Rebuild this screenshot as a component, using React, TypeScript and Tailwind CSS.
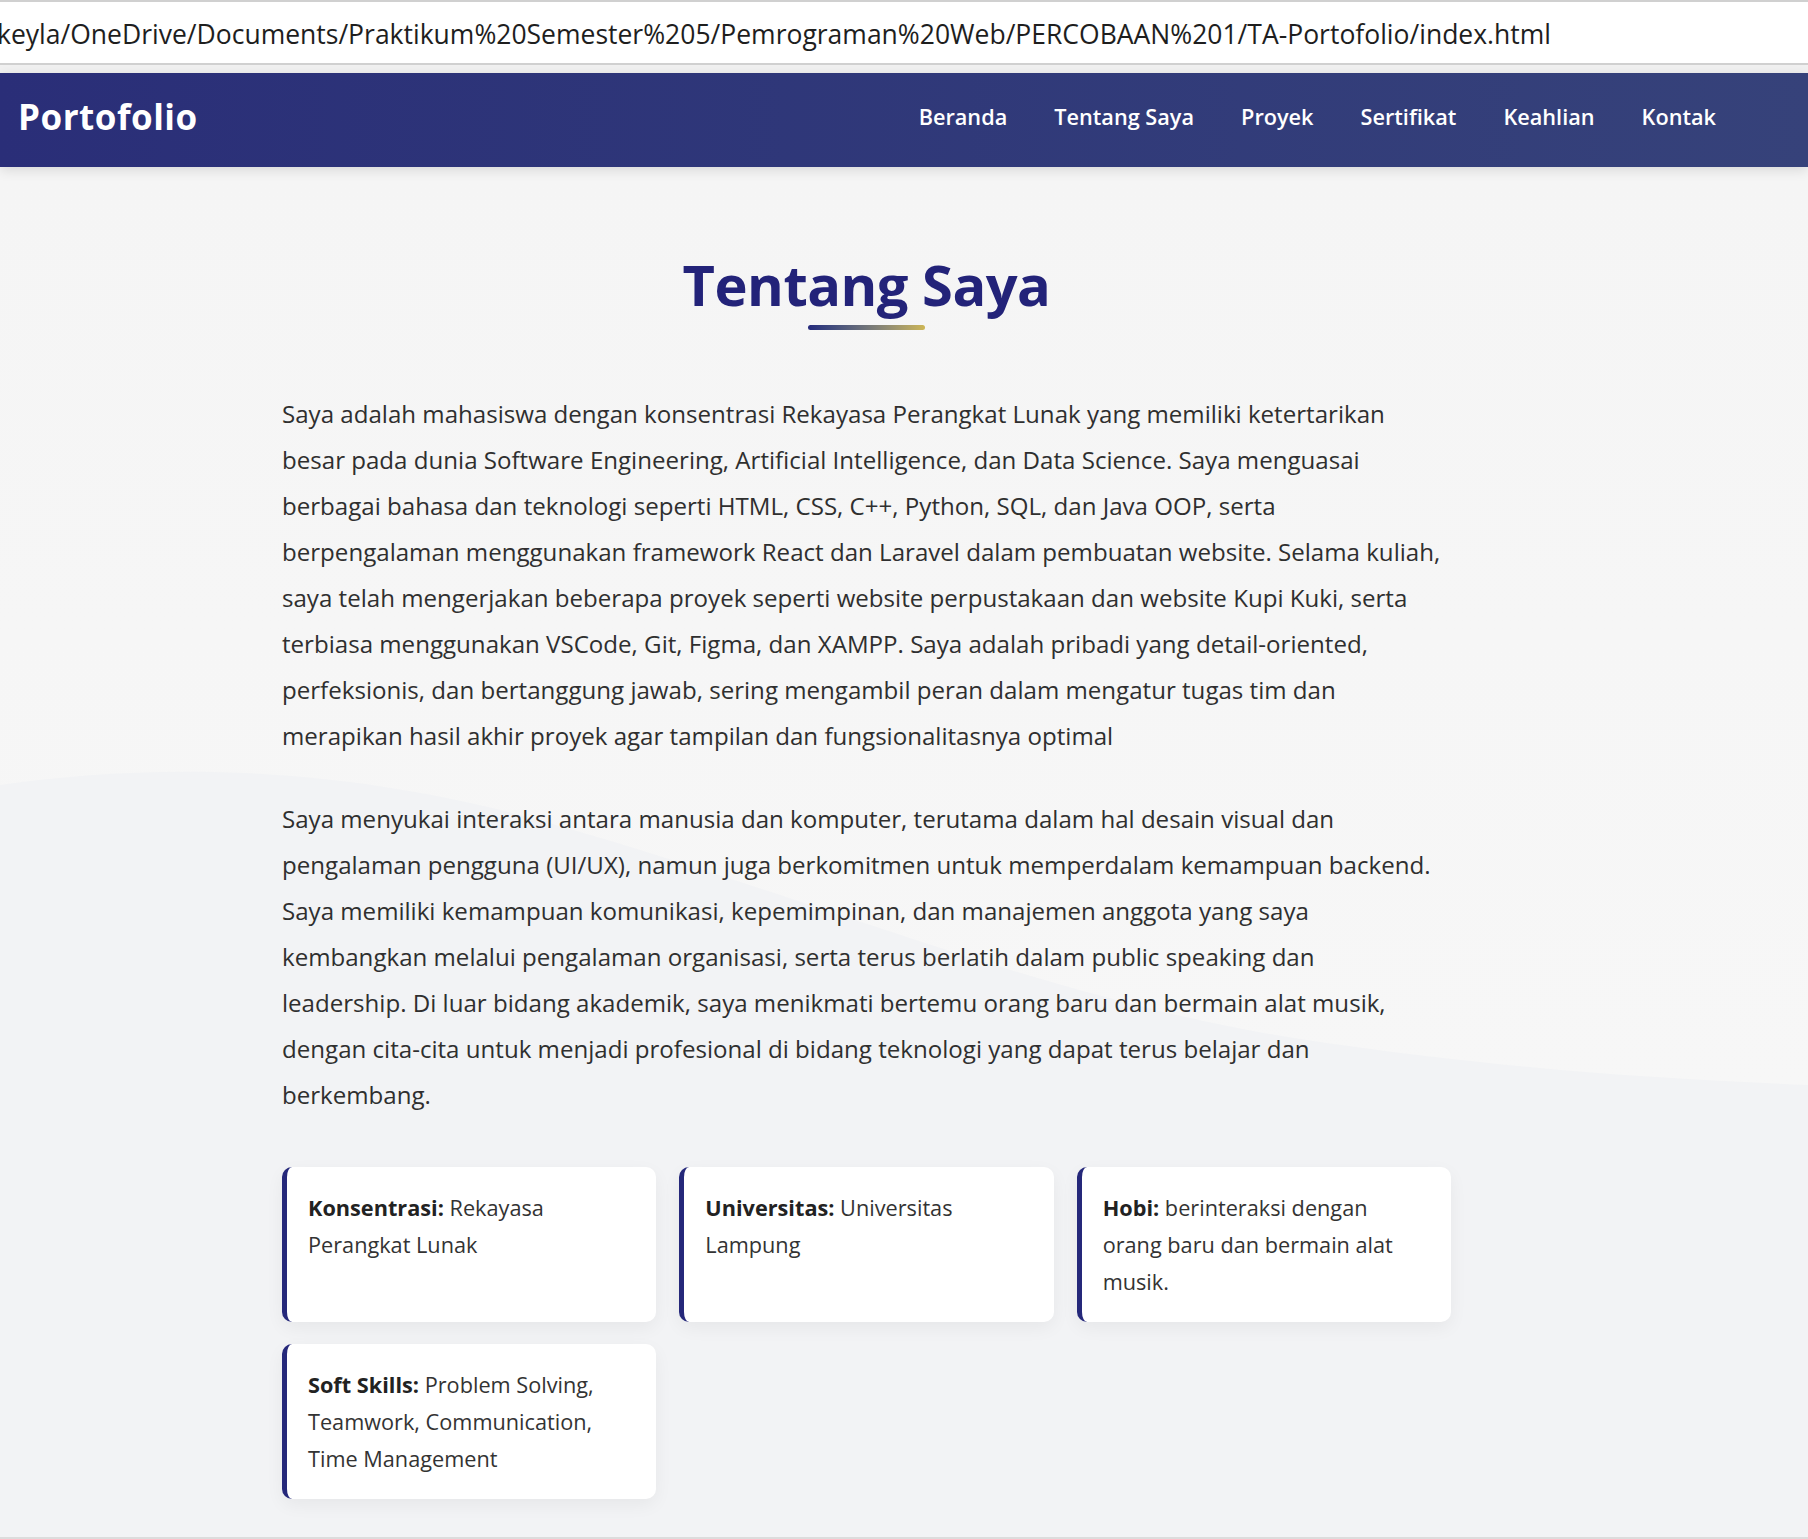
import React from "react";

const para1 = [
  "Saya adalah mahasiswa dengan konsentrasi Rekayasa Perangkat Lunak yang memiliki ketertarikan",
  "besar pada dunia Software Engineering, Artificial Intelligence, dan Data Science. Saya menguasai",
  "berbagai bahasa dan teknologi seperti HTML, CSS, C++, Python, SQL, dan Java OOP, serta",
  "berpengalaman menggunakan framework React dan Laravel dalam pembuatan website. Selama kuliah,",
  "saya telah mengerjakan beberapa proyek seperti website perpustakaan dan website Kupi Kuki, serta",
  "terbiasa menggunakan VSCode, Git, Figma, dan XAMPP. Saya adalah pribadi yang detail-oriented,",
  "perfeksionis, dan bertanggung jawab, sering mengambil peran dalam mengatur tugas tim dan",
  "merapikan hasil akhir proyek agar tampilan dan fungsionalitasnya optimal",
];

const para2 = [
  "Saya menyukai interaksi antara manusia dan komputer, terutama dalam hal desain visual dan",
  "pengalaman pengguna (UI/UX), namun juga berkomitmen untuk memperdalam kemampuan backend.",
  "Saya memiliki kemampuan komunikasi, kepemimpinan, dan manajemen anggota yang saya",
  "kembangkan melalui pengalaman organisasi, serta terus berlatih dalam public speaking dan",
  "leadership. Di luar bidang akademik, saya menikmati bertemu orang baru dan bermain alat musik,",
  "dengan cita-cita untuk menjadi profesional di bidang teknologi yang dapat terus belajar dan",
  "berkembang.",
];

const cards = [
  { label: "Konsentrasi:", lines: ["Rekayasa", "Perangkat Lunak"] },
  { label: "Universitas:", lines: ["Universitas", "Lampung"] },
  { label: "Hobi:", lines: ["berinteraksi dengan", "orang baru dan bermain alat", "musik."] },
  { label: "Soft Skills:", lines: ["Problem Solving,", "Teamwork, Communication,", "Time Management"] },
];

function Paragraph({ lines, className }: { lines: string[]; className?: string }) {
  return (
    <p className={"text-[24.1px] leading-[46px] text-[#2f2f2f] whitespace-nowrap " + (className ?? "")}>
      {lines.map((l, i) => (
        <React.Fragment key={i}>
          {l}
          {i < lines.length - 1 && <br />}
        </React.Fragment>
      ))}
    </p>
  );
}

export default function App() {
  return (
    <div className="w-[1808px] min-h-[1539px] bg-[#f5f5f5] font-['Open_Sans','Noto_Sans',sans-serif] overflow-hidden">
      {/* address bar */}
      <div className="h-[65px] bg-white border-t-2 border-b-2 border-[#d0d0d0] flex items-center overflow-hidden">
        <span className="mt-[4px] -ml-[3px] whitespace-nowrap text-[26.5px] text-[#1e1e1e]">
          keyla/OneDrive/Documents/Praktikum%20Semester%205/Pemrograman%20Web/PERCOBAAN%201/TA-Portofolio/index.html
        </span>
      </div>
      <div className="h-[8px] bg-[#f1f1f1]" />

      {/* nav */}
      <nav className="relative z-10 h-[94px] bg-gradient-to-r from-[#2a2e78] to-[#36427a] flex items-center justify-between pl-[18px] pr-[92px] pb-[5px] shadow-[0_3px_12px_rgba(0,0,0,0.12)]">
        <div className="text-white font-bold text-[35px] tracking-[0.5px]">Portofolio</div>
        <ul className="flex items-center gap-[47px] text-white font-semibold text-[21.7px]">
          <li>Beranda</li>
          <li>Tentang Saya</li>
          <li>Proyek</li>
          <li>Sertifikat</li>
          <li>Keahlian</li>
          <li>Kontak</li>
        </ul>
      </nav>

      {/* about section */}
      <section className="relative bg-gradient-to-b from-[#f5f5f5] to-[#f8f8f8] min-h-[1372px]">
        <svg
          className="absolute inset-0 w-full h-full"
          viewBox="0 0 1808 1372"
          preserveAspectRatio="none"
        >
          <path
            d="M0,618 C150,596 330,598 520,648 C800,724 1040,832 1300,872 C1500,902 1660,912 1808,918 L1808,1372 L0,1372 Z"
            fill="#f2f3f5"
          />
        </svg>
        <div className="relative pr-[75px]">
          <div className="mx-auto w-[1169px] pt-[77px] pb-[36px]">
            <div className="flex flex-col items-center">
              <h2 className="text-[56px] leading-[80px] font-bold text-[#232379] tracking-[-0.5px]">Tentang Saya</h2>
              <div className="mt-[1px] h-[5px] w-[117px] rounded-full bg-gradient-to-r from-[#262a7c] to-[#cdb655]" />
            </div>

            <Paragraph lines={para1} className="mt-[61px]" />
            <Paragraph lines={para2} className="mt-[37px]" />

            <div className="mt-[49px] grid grid-cols-3 gap-x-[23px] gap-y-[22px]">
              {cards.map((c, i) => (
                <div
                  key={i}
                  className="min-h-[155px] bg-white rounded-[10px] border-l-[5px] border-[#25287a] pl-[21px] pr-[19px] py-[22px] shadow-[0_6px_18px_rgba(0,0,0,0.05)]"
                >
                  <p className="text-[21.7px] leading-[37px] text-[#333] whitespace-nowrap">
                    <strong className="font-bold text-[#222]">{c.label}</strong> {c.lines[0]}
                    {c.lines.slice(1).map((l, j) => (
                      <React.Fragment key={j}>
                        <br />
                        {l}
                      </React.Fragment>
                    ))}
                  </p>
                </div>
              ))}
            </div>
          </div>
        </div>
        <div className="absolute bottom-0 left-0 right-0 h-[2px] bg-[#dcdcdc]" />
      </section>
    </div>
  );
}
